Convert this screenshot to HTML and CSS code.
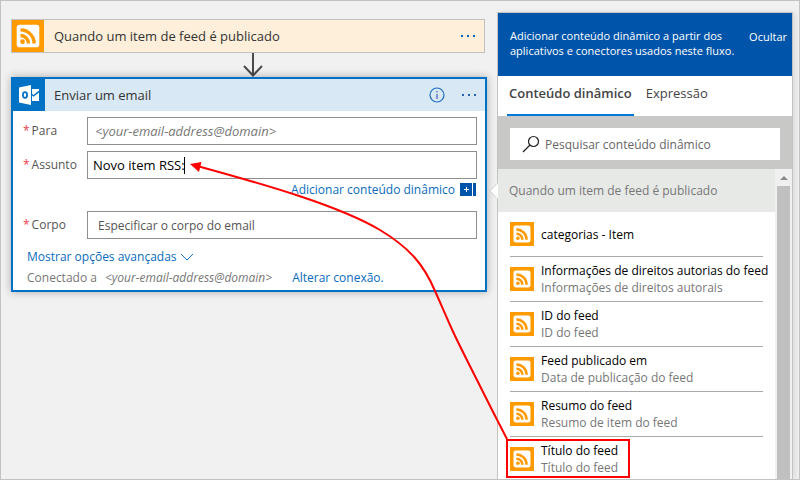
FILE: index.html
```html
<!DOCTYPE html>
<html lang="pt-BR">
<head>
<meta charset="utf-8">
<meta name="viewport" content="width=device-width, initial-scale=1">
<title>Enviar um email</title>
<link rel="stylesheet" href="styles.css">
</head>
<body>
<svg class="defs" aria-hidden="true">
  <symbol id="rss" viewBox="0 0 34 34">
    <rect width="34" height="34" fill="#ff9a00"/>
    <rect x="5" y="5" width="24" height="24" rx="3" fill="#fff"/>
    <circle cx="11.200" cy="23" r="2.500" fill="#ff9a00"/>
    <path d="M9 16.500a8.500 8.500 0 0 1 8.500 8.500M9 10.500a14.500 14.500 0 0 1 14.500 14.500" fill="none" stroke="#ff9a00" stroke-width="3.600"/>
  </symbol>
</svg>
<div class="page">
  <main class="flow">
    <section class="trigger">
      <svg class="trigger-icon" aria-hidden="true"><use href="#rss"/></svg>
      <h2 class="card-title">Quando um item de feed é publicado</h2>
      <button class="more" type="button" aria-label="Mais"><svg width="16" height="4" viewBox="0 0 16 4"><path d="M1 1h2v2H1zM7 1h2v2H7zM13 1h2v2h-2z" fill="#0a64b4"/></svg></button>
    </section>
    <svg class="connector" viewBox="0 0 20 24" aria-hidden="true"><path d="M10 0v22M1 13l9 9.500 9-9.500" fill="none" stroke="#4a4a4a" stroke-width="2"/></svg>
    <section class="action">
      <header class="action-head">
        <svg class="outlook" viewBox="0 0 32 32" aria-hidden="true">
          <path d="M6 8.500 18 6v20L6 23.500z" fill="#fff"/>
          <ellipse cx="12" cy="16" rx="2.100" ry="2.800" fill="none" stroke="#0072c6" stroke-width="1.800"/>
          <path d="M19 10h7v1.500l-5.500 4.500-1.500-1.200zM19 16.500l1.500 1.200L26 13.500V22h-7z" fill="#fff"/>
        </svg>
        <h2 class="card-title">Enviar um email</h2>
        <button class="info" type="button" aria-label="Informações"><svg width="16" height="16" viewBox="0 0 16 16"><circle cx="8" cy="8" r="7" fill="none" stroke="#1f6fc0" stroke-width="1.200"/><path d="M8 7v5M8 4v1.500" stroke="#4a5cc0" stroke-width="1.200"/></svg></button>
        <button class="more" type="button" aria-label="Mais"><svg width="16" height="4" viewBox="0 0 16 4"><path d="M1 1h2v2H1zM7 1h2v2H7zM13 1h2v2h-2z" fill="#2a60b8"/></svg></button>
      </header>
      <form class="fields">
        <div class="field">
          <label for="to"><span class="req">*</span>Para</label>
          <input id="to" class="box mail" type="text" placeholder="&lt;your-email-address@domain&gt;">
        </div>
        <div class="field">
          <label for="subject"><span class="req">*</span>Assunto</label>
          <div class="typed">
            <input id="subject" class="box" type="text" value="Novo item RSS:">
            <span class="caret"></span>
          </div>
        </div>
        <div class="add">
          <a href="#dynamic">Adicionar conteúdo dinâmico</a>
          <svg width="16" height="13" viewBox="0 0 16 13" aria-hidden="true"><path d="M0 0h12v13H0zM13 0h3v13h-3z" fill="#0055aa"/><path d="M4 6.500h5M6.500 4v5" stroke="#fff"/></svg>
        </div>
        <div class="field">
          <label for="body"><span class="req">*</span>Corpo</label>
          <input id="body" class="box wide" type="text" placeholder="Especificar o corpo do email">
        </div>
        <div class="advanced">
          <a href="#advanced">Mostrar opções avançadas</a>
          <svg width="14" height="8" viewBox="0 0 14 8" aria-hidden="true"><path d="M1 1l6 6 6-6" fill="none" stroke="#1a72c4"/></svg>
        </div>
        <div class="connected">
          <span>Conectado a</span>
          <em>&lt;your-email-address@domain&gt;</em>
          <a href="#connection">Alterar conexão.</a>
        </div>
      </form>
    </section>
  </main>
  <aside class="panel" id="dynamic">
    <svg class="pointer" viewBox="0 0 9 18" aria-hidden="true"><path d="M9 1 1 9l8 8z" fill="#fff"/><path d="M8 1.500 1 9l7 7.500" fill="none" stroke="#d0d0d0"/></svg>
    <header class="panel-head">
      <p>Adicionar conteúdo dinâmico a partir dos aplicativos e conectores usados neste fluxo.</p>
      <button type="button">Ocultar</button>
    </header>
    <nav class="tabs">
      <button class="tab active" type="button">Conteúdo dinâmico</button>
      <button class="tab" type="button">Expressão</button>
    </nav>
    <div class="search">
      <label class="search-box">
        <svg width="18" height="18" viewBox="0 0 18 18" aria-hidden="true"><circle cx="11.500" cy="6.500" r="5" fill="none" stroke="#222" stroke-width="1.200"/><path d="M8 10l-7 7" stroke="#222" stroke-width="1.200"/></svg>
        <input type="search" aria-label="Pesquisar" placeholder="Pesquisar conteúdo dinâmico">
      </label>
    </div>
    <div class="results">
      <div class="list">
        <h3 class="group">Quando um item de feed é publicado</h3>
        <ul>
          <li><svg class="rss" aria-hidden="true"><use href="#rss"/></svg><div><b>categorias - Item</b></div></li>
          <li><svg class="rss" aria-hidden="true"><use href="#rss"/></svg><div><b>Informações de direitos autorias do feed</b><span>Informações de direitos autorais</span></div></li>
          <li><svg class="rss" aria-hidden="true"><use href="#rss"/></svg><div><b>ID do feed</b><span>ID do feed</span></div></li>
          <li><svg class="rss" aria-hidden="true"><use href="#rss"/></svg><div><b>Feed publicado em</b><span>Data de publicação do feed</span></div></li>
          <li><svg class="rss" aria-hidden="true"><use href="#rss"/></svg><div><b>Resumo do feed</b><span>Resumo de item do feed</span></div></li>
          <li><svg class="rss" aria-hidden="true"><use href="#rss"/></svg><div><b>Título do feed</b><span>Título do feed</span></div></li>
        </ul>
      </div>
      <div class="scrollbar"><svg width="8" height="4" viewBox="0 0 8 4" aria-hidden="true"><path d="M0 4l4-4 4 4z" fill="#8a8a8a"/></svg><div class="thumb"></div></div>
    </div>
  </aside>
  <svg class="callout" width="800" height="480" viewBox="0 0 800 480" aria-hidden="true">
    <rect x="507" y="440" width="122" height="37" fill="none" stroke="#f00" stroke-width="2"/>
    <path d="M507 439C496 418 486 398 477 380C467 360 457 341 450 325C442 307 440 302 435 291C424 265 410 248 380 230C339 206 270 186 199 166.500" fill="none" stroke="#f00" stroke-width="2"/>
    <path d="M190 164l11.500-2-2.500 10z" fill="#f00"/>
  </svg>
</div>
</body>
</html>
```
FILE: styles.css
```css
* { box-sizing: border-box; }
body {
  margin: 0;
  font: 12px/17px "Open Sans", "Noto Sans", sans-serif;
  color: #333;
}
h2, h3, p, ul { margin: 0; padding: 0; font-weight: 400; }
button { border: 0; background: none; padding: 0; font: inherit; color: inherit; }
input { font: inherit; color: #000; border: 0; min-width: 0; }
a { color: #0a6cbd; text-decoration: none; }
.defs { position: absolute; width: 0; height: 0; }
.page {
  position: relative;
  display: flex;
  gap: 10px;
  height: 100vh;
  overflow: hidden;
  padding: 11px 6px 0 10px;
  border: 1px solid #c3c3c3;
  background: #f1f1f1;
}
.flow { flex: 1; display: flex; flex-direction: column; padding-top: 7px; min-width: 0; }
.trigger {
  display: flex;
  align-items: center;
  height: 34px;
  margin-right: 2px;
  padding-right: 8px;
  border: 1px solid #c3c0bc;
  background: #feefda;
}
.trigger-icon { width: 32px; height: 32px; }
.card-title { flex: 1; margin-left: 9px; font-size: 13px; color: #333; }
.trigger .card-title { margin-left: 10px; }
.more { display: flex; }
.connector { width: 20px; height: 24px; align-self: center; margin-left: 8px; }
.action {
  border: 2px solid #0072c6;
  background: #fff;
  box-shadow: 0 0 8px rgba(0, 0, 0, .3);
}
.action-head {
  display: flex;
  align-items: center;
  height: 32px;
  padding-right: 8px;
  background: #d9e8f5;
}
.outlook { width: 32px; height: 32px; background: #0072c6; }
.info { display: flex; margin-right: 16px; }
.fields { padding: 6px 8px 4px 10px; }
.field { display: flex; }
.field + .field { margin-top: 6px; }
.field label { width: 64px; padding-top: 5px; color: #555; }
.req { color: #e8414d; margin-right: 2px; }
.box {
  flex: 1;
  width: 100%;
  height: 28px;
  padding: 0 5px;
  border: 1px solid #8f8f8f;
  background: #fff;
  font-size: 13px;
}
.box.mail { font-style: italic; padding-left: 7px; }
.box.wide { padding-left: 10px; font-size: 12px; }
.box::placeholder { color: #555; opacity: 1; }
.box.mail::placeholder { color: #777; }
.typed { position: relative; flex: 1; display: flex; }
.caret { position: absolute; left: 97px; top: 6px; width: 1px; height: 17px; background: #000; }
.add {
  display: flex;
  justify-content: flex-end;
  align-items: center;
  gap: 5px;
  height: 20px;
  margin-bottom: 12px;
  padding-right: 1px;
}
.advanced { display: flex; align-items: center; gap: 3px; margin: 9px 0 4px 4px; }
.connected { display: flex; align-items: center; gap: 8px; margin-left: 4px; color: #777; }
.connected a { margin-left: 12px; }
.panel {
  position: relative;
  display: flex;
  flex-direction: column;
  width: 296px;
  border: 1px solid #c3c3c3;
  border-bottom: 0;
  background: #fff;
  box-shadow: 3px 0 5px rgba(0, 0, 0, .08);
}
.pointer { position: absolute; left: -9px; top: 169px; width: 9px; height: 18px; }
.panel-head {
  display: flex;
  justify-content: space-between;
  height: 63px;
  padding: 15px 5px 0 12px;
  background: #0055aa;
  color: #fff;
  font-size: 11px;
  line-height: 15px;
}
.panel-head p { width: 230px; }
.panel-head button { align-self: flex-start; padding-top: 1px; }
.tabs { display: flex; gap: 10px; height: 40px; padding-left: 9px; }
.tab { padding: 0 2px 4px; font-size: 13px; border-bottom: 2px solid transparent; color: #444; }
.tab.active { font-weight: 600; border-color: #0078d7; }
.search { padding: 12px 12px 9px; background: #c8c9c7; }
.search-box { display: flex; align-items: center; gap: 5px; height: 32px; padding-left: 12px; background: #fff; }
.search-box input { flex: 1; padding: 0; background: none; appearance: none; }
.search-box input::placeholder { color: #666; opacity: 1; }
.results { flex: 1; display: flex; min-height: 0; overflow: hidden; }
.list { flex: 1; min-width: 0; }
.group { height: 43px; padding: 13px 11px; font-size: 12px; color: #777; background: #e7e9e7; }
.list ul { padding: 0 12px; list-style: none; }
.list li { display: flex; align-items: center; gap: 7px; height: 45px; border-bottom: 1px solid #aaa; white-space: nowrap; }
.list li:last-child { border-color: transparent; }
.list b, .list span { display: block; font-weight: 400; }
.list b { color: #000; }
.list span { color: #777; }
.rss { width: 24px; height: 24px; flex: none; }
.scrollbar { display: flex; flex-direction: column; align-items: center; width: 17px; padding-top: 7px; background: #f0f0f0; }
.thumb { flex: 1; width: 13px; margin-top: 6px; background: #c0c0c0; }
.callout { position: absolute; left: -1px; top: -1px; }
```
